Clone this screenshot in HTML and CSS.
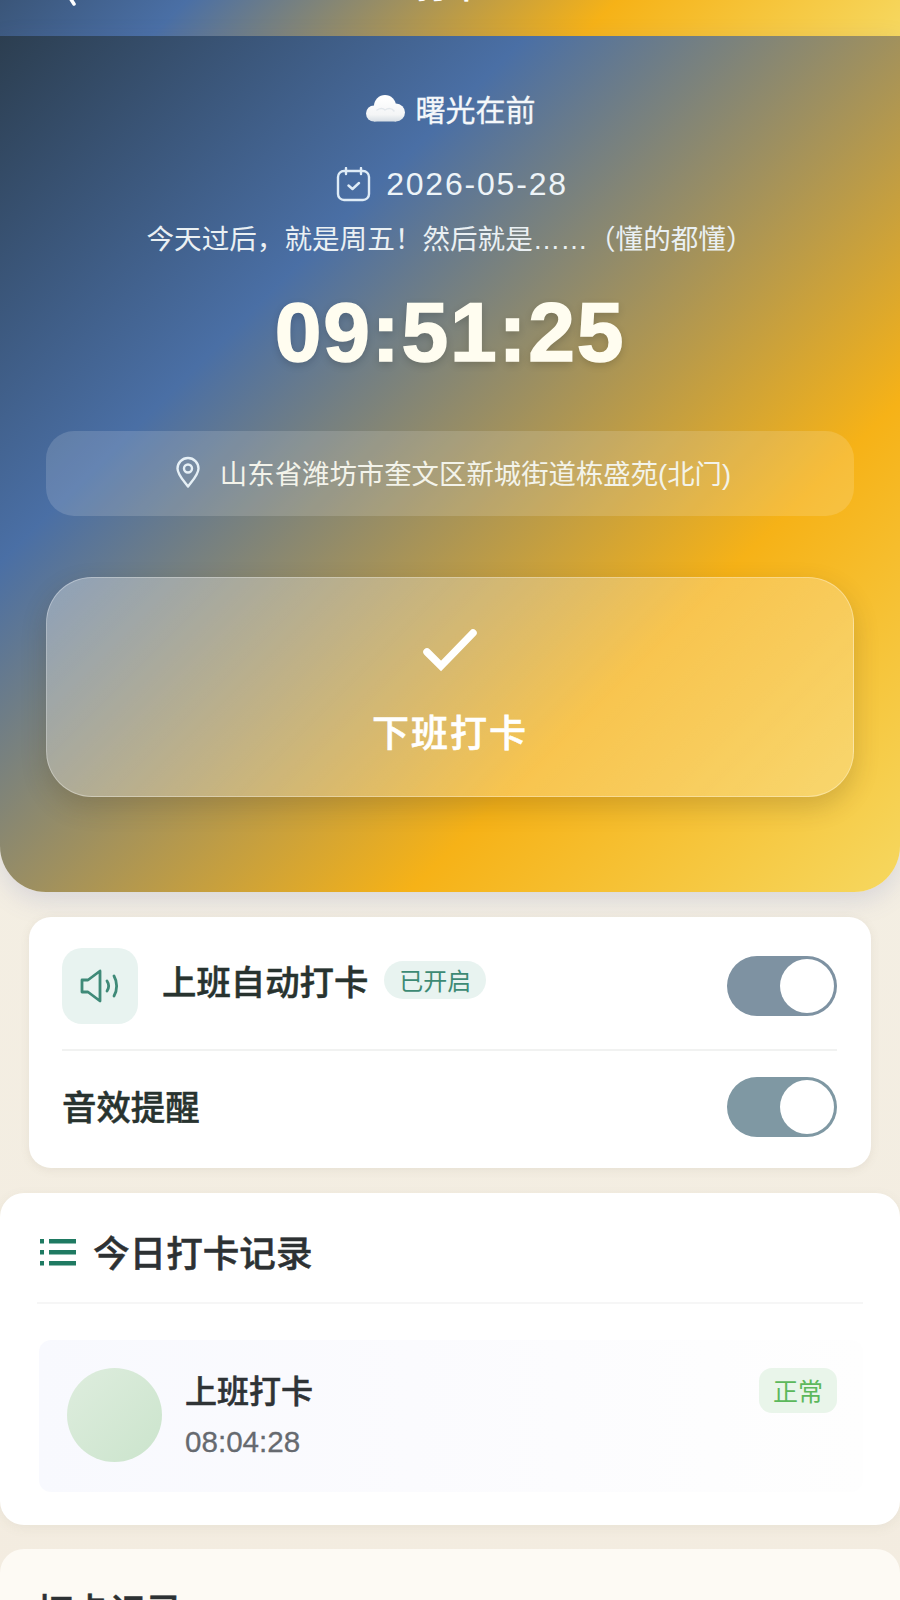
FILE: index.html
```html
<!DOCTYPE html>
<html lang="zh-CN">
<head>
<meta charset="utf-8">
<title>打卡</title>
<link rel="stylesheet" href="styles.css">
</head>
<body>
<div class="page">
  <header class="topbar">
    <div class="topbar-inner">
      <svg class="back" viewBox="0 0 14 40" width="14" height="40"><path d="M12 2 3 16l9 14" fill="none" stroke="#fff" stroke-width="3.5" stroke-linecap="round" stroke-linejoin="round"/></svg>
      <span class="page-title">打卡</span>
    </div>
  </header>
  <section class="hero">
    <div class="weather">
      <svg width="40" height="28" viewBox="0 0 40 28">
        <defs><linearGradient id="cl" gradientUnits="userSpaceOnUse" x1="0" y1="4" x2="0" y2="28"><stop offset="0" stop-color="#fff"/><stop offset=".7" stop-color="#f4f5f6"/><stop offset="1" stop-color="#d5dde4"/></linearGradient></defs>
        <g fill="url(#cl)">
          <circle cx="9" cy="19.500" r="8"/>
          <circle cx="20" cy="12" r="11"/>
          <circle cx="31" cy="18.500" r="9"/>
          <rect x="9" y="16" width="22" height="11.500"/>
        </g>
        <path d="M12 16c3-2 6-2 8 0 3-2 7-2 9 1" fill="none" stroke="#e3e8ec" stroke-width="1.500" stroke-linecap="round"/>
      </svg>
      <span>曙光在前</span>
    </div>
    <div class="date">
      <svg width="35" height="35" viewBox="0 0 35 35" fill="none" stroke="#dfecf7" stroke-width="2.400" stroke-linecap="round" stroke-linejoin="round">
        <rect x="2" y="4" width="31" height="29" rx="6"/>
        <path d="M10 1v6M25 1v6M12.500 18.500l4 3.500 6.500-6"/>
      </svg>
      <span>2026-05-28</span>
    </div>
    <p class="quote">今天过后，就是周五！然后就是……（懂的都懂）</p>
    <div class="clock">09:51:25</div>
    <div class="location">
      <svg width="26" height="32" viewBox="0 0 26 32" fill="none" stroke="#e6f0f6" stroke-width="2.400" stroke-linejoin="round">
        <path d="M13 30.500C8 24 2.500 18.500 2.500 12.500a10.500 10.500 0 0 1 21 0C23.500 18.500 18 24 13 30.500Z"/>
        <circle cx="13" cy="12.500" r="4"/>
      </svg>
      <span>山东省潍坊市奎文区新城街道栋盛苑(北门)</span>
    </div>
    <button class="punch" type="button">
      <svg width="56" height="44" viewBox="0 0 56 44"><path d="M5 24 19 38 51 5" fill="none" stroke="#fff" stroke-width="7.500" stroke-linecap="round" stroke-linejoin="miter"/></svg>
      <span>下班打卡</span>
    </button>
  </section>

  <section class="settings">
    <div class="setting-row">
      <div class="icon-box">
        <svg width="40" height="36" viewBox="0 0 40 36" fill="none" stroke="#3f8a78" stroke-width="2.800" stroke-linecap="round" stroke-linejoin="round">
          <path d="M2 12v12h6l12 9V3L8 12Z"/>
          <path d="M27 13c2 3 2 7 0 10M34 8c3.500 6 3.500 14 0 20"/>
        </svg>
      </div>
      <div class="setting-head">
        <span class="setting-name">上班自动打卡</span>
        <span class="on-badge">已开启</span>
      </div>
      <div class="toggle"><i></i></div>
    </div>
    <div class="setting-line"></div>
    <div class="setting-row sound">
      <span class="setting-name sound-name">音效提醒</span>
      <div class="toggle teal"><i></i></div>
    </div>
  </section>

  <section class="records">
    <div class="records-head">
      <svg width="36" height="28" viewBox="0 0 36 28" fill="#1f7a62">
        <rect x="0" y="1" width="4" height="4.500"/><rect x="0" y="12" width="4" height="4.500"/><rect x="0" y="23" width="4" height="4.500"/>
        <rect x="9" y="1" width="27" height="4.500"/><rect x="9" y="12" width="27" height="4.500"/><rect x="9" y="23" width="27" height="4.500"/>
      </svg>
      <h2>今日打卡记录</h2>
    </div>
    <div class="record">
      <div class="avatar"></div>
      <div class="record-text">
        <div class="record-label">上班打卡</div>
        <div class="record-time">08:04:28</div>
      </div>
      <span class="status">正常</span>
    </div>
  </section>

  <section class="history">
    <h2>打卡记录</h2>
  </section>
</div>
</body>
</html>
```
FILE: styles.css
```css
* { box-sizing: border-box; }
html, body { margin: 0; padding: 0; }
body {
  width: 900px;
  height: 1600px;
  overflow: hidden;
  background: #f3efe4;
  font-family: "Noto Sans CJK SC", "Noto Sans", sans-serif;
}
.page { display: flex; flex-direction: column; background: linear-gradient(180deg, #f4f1e6 0%, #f3ece0 100%); height: 1600px; }

.topbar {
  height: 36px;
  overflow: hidden;
  background: linear-gradient(135deg, #2c3e50 -18%, #4a6fa5 20%, #f6b217 66%, #f6d860 100%);
  flex: none;
}
.topbar-inner {
  margin-top: -36px;
  height: 40px;
  display: flex;
  align-items: flex-end;
  justify-content: center;
  position: relative;
}
.back { position: absolute; left: 62px; top: 10px; }
.page-title { color: #fff; font-size: 34px; font-weight: 500; line-height: 40px; -webkit-text-stroke: .5px #fff; }

.hero {
  flex: none;
  height: 856px;
  border-radius: 0 0 46px 46px;
  background: linear-gradient(135deg, #2c3e50 0%, #4a6fa5 30%, #f6b217 72%, #f6d860 100%);
  box-shadow: 0 8px 26px rgba(90, 100, 170, .18);
  padding-top: 52px;
  display: flex;
  flex-direction: column;
  align-items: center;
  color: #fff;
}
.weather, .date, .location { display: flex; align-items: center; }
.weather { height: 40px; gap: 11px; font-size: 30px; color: #f4f7fa; -webkit-text-stroke: .3px #f4f7fa; }
.date { height: 40px; margin-top: 36px; gap: 15px; padding-left: 4px; font-family: "Liberation Sans", sans-serif; font-size: 32px; letter-spacing: 1.800px; color: #eef4f8; }
.quote {
  margin: 16px 0 0;
  height: 40px;
  line-height: 40px;
  font-family: "Liberation Sans", "Noto Sans CJK SC", sans-serif;
  font-size: 27.600px;
  color: #eaf0f3;
}
.clock {
  margin-top: 27px;
  height: 90px;
  line-height: 90px;
  font-family: "Liberation Sans", sans-serif;
  font-weight: 700;
  font-size: 84px;
  letter-spacing: 1.800px;
  color: #fffdf0;
  -webkit-text-stroke: 1.500px #fffdf0;
  text-shadow: 0 3px 8px rgba(0, 0, 0, .18);
}
.location {
  margin-top: 54px;
  width: 808px;
  height: 85px;
  flex: none;
  justify-content: center;
  gap: 19px;
  padding: 0 0 3px 6px;
  border-radius: 28px;
  background: rgba(255, 255, 255, .15);
  font-family: "Liberation Sans", "Noto Sans CJK SC", sans-serif;
  font-size: 27.400px;
  color: #f3f3ea;
}
.punch {
  margin-top: 61px;
  width: 808px;
  height: 220px;
  flex: none;
  border-radius: 46px;
  border: 1.500px solid rgba(255, 255, 255, .32);
  background: linear-gradient(135deg, rgba(255, 255, 255, .32), rgba(255, 255, 255, .2));
  box-shadow: 0 10px 26px rgba(60, 50, 30, .2);
  display: flex;
  flex-direction: column;
  align-items: center;
  padding: 50px 0 0;
  font-family: inherit;
  color: #fff;
}
.punch span { margin-top: 34px; font-size: 37px; line-height: 50px; font-weight: 500; letter-spacing: 2px; -webkit-text-stroke: .6px #fff; }

.settings {
  flex: none;
  margin: 25px 29px 0;
  height: 251px;
  padding: 31px 34px 0 33px;
  background: #fff;
  border-radius: 22px;
  box-shadow: 0 2px 10px rgba(120, 110, 90, .1);
}
.setting-row { display: flex; align-items: center; height: 76px; }
.setting-row.sound { height: 60px; justify-content: space-between; margin-top: 26px; }
.icon-box {
  width: 76px;
  height: 76px;
  border-radius: 20px;
  background: #e8f3f0;
  display: flex;
  align-items: center;
  justify-content: center;
}
.setting-head { display: flex; align-items: center; gap: 16px; margin-left: 24px; margin-bottom: 12px; flex: 1; }
.setting-name { font-size: 34.400px; line-height: 44px; font-weight: 500; color: #28332f; -webkit-text-stroke: .5px #28332f; }
.sound-name { margin-bottom: 4px; }
.on-badge {
  font-size: 24px;
  line-height: 38px;
  height: 38px;
  padding: 0 15px;
  border-radius: 19px;
  background: #e8f3f0;
  color: #3d8a74;
}
.setting-line { height: 2px; background: #f1f2f1; margin-top: 25px; }
.toggle {
  width: 110px;
  height: 60px;
  border-radius: 30px;
  background: #7e92a2;
  padding: 3px;
  display: flex;
  justify-content: flex-end;
}
.toggle.teal { background: #7f98a3; }
.toggle i { display: block; width: 54px; height: 54px; border-radius: 50%; background: #fff; }

.records {
  flex: none;
  margin-top: 25px;
  height: 332px;
  padding: 40px 37px 0;
  background: #fff;
  border-radius: 24px;
  box-shadow: 0 3px 12px rgba(120, 110, 90, .08);
}
.records-head {
  display: flex;
  align-items: center;
  gap: 17px;
  height: 71px;
  padding: 0 0 31px 3px;
  border-bottom: 2px solid #f6f6f6;
}
h2 { margin: 0; font-size: 36.600px; line-height: 40px; font-weight: 500; color: #2d3133; -webkit-text-stroke: .5px #2d3133; }
.record {
  margin: 36px 0 0 2px;
  height: 152px;
  padding: 28px 26px 0 28px;
  display: flex;
  align-items: flex-start;
  background: linear-gradient(90deg, #f8f9fe 0%, #fbfbfe 45%, #fefefe 100%);
  border-radius: 12px;
}
.avatar {
  width: 95px;
  height: 94px;
  border-radius: 50%;
  background: linear-gradient(135deg, #dcecdc 10%, #cde5ce 90%);
}
.record-text { margin: 1px 0 0 23px; flex: 1; }
.record-label { font-size: 32px; line-height: 40px; font-weight: 500; color: #2f3336; -webkit-text-stroke: .5px #2f3336; }
.record-time { margin-top: 13px; font-family: "Liberation Sans", sans-serif; font-size: 29.600px; line-height: 40px; color: #666a70; -webkit-text-stroke: .3px #666a70; }
.status {
  width: 78px;
  height: 45px;
  line-height: 45px;
  text-align: center;
  border-radius: 13px;
  background: #e9f5ea;
  color: #5cb85c;
  font-size: 25px;
}
.history {
  flex: none;
  margin-top: 24px;
  height: 200px;
  padding: 41px 36px 0;
  background: #fdfaf4;
  border-radius: 24px;
}
```
